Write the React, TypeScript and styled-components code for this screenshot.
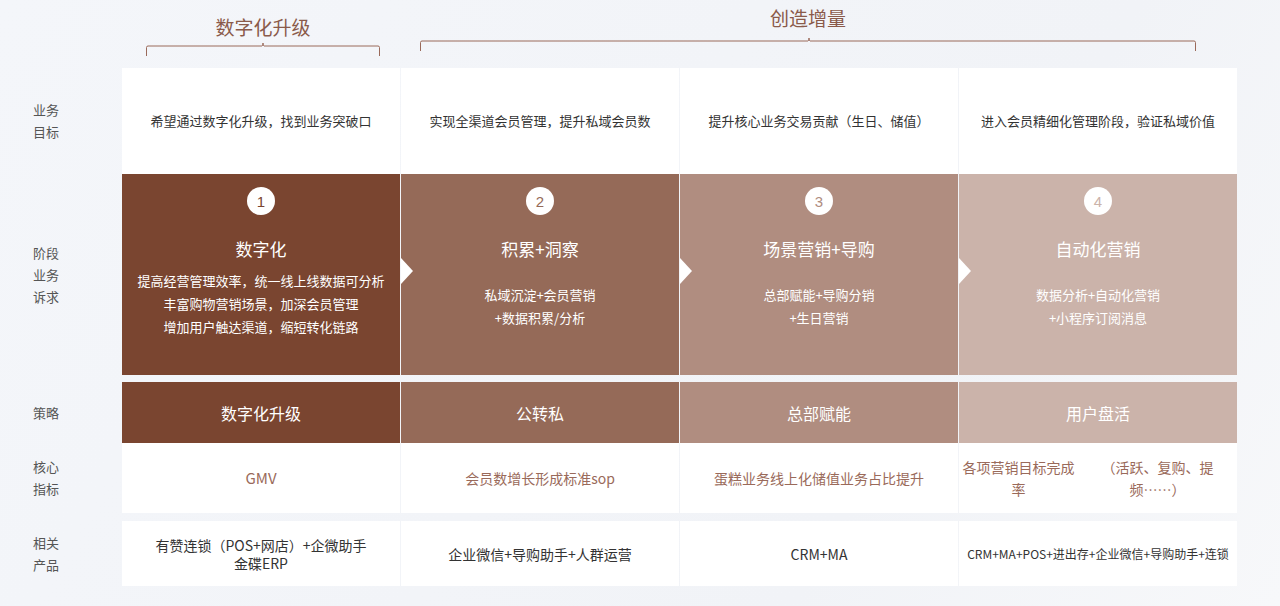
import React from "react";
import styled, { createGlobalStyle } from "styled-components";

const Global = createGlobalStyle`
  html, body { margin: 0; padding: 0; }
  body { background: linear-gradient(120deg, #f4f6fa 0%, #f1f3f7 70%, #f7f8fa 100%); font-family: "Noto Sans CJK SC", "Noto Sans", sans-serif; }
`;

const Page = styled.div`
  width: 1280px; height: 606px; overflow: hidden;
  display: flex; flex-direction: column;
`;
const Header = styled.div`
  height: 68px; display: grid; grid-template-columns: 121px 278px 834px; 
`;
const Group = styled.div<{ $top: number; $l: number; $r: number }>`
  display: flex; flex-direction: column; align-items: stretch;
  padding: ${p => p.$top}px ${p => p.$r}px 0 ${p => p.$l}px;
`;
const GroupTitle = styled.div`
  text-align: center; color: #8a5a4a; font-size: 19px; line-height: 26px;
`;
const Grid = styled.div`
  display: grid; grid-template-columns: 121px repeat(4, 278px);
  column-gap: 1px;
`;
const Label = styled.div<{ $h: number }>`
  height: ${p => p.$h}px; display: flex; align-items: center; justify-content: center;
  color: #555; font-size: 13px; line-height: 22px; text-align: center; width: 70px;
  padding-left: 22px; box-sizing: border-box;
`;
const White = styled.div<{ $h: number; $c?: string; $fs?: number }>`
  height: ${p => p.$h}px; background: #fff; display: flex; align-items: center; justify-content: center;
  text-align: center; color: ${p => p.$c || "#333"}; font-size: ${p => p.$fs || 13}px; line-height: 22px;
`;
const colors = ["#7a4530", "#956a58", "#b08d80", "#cbb3aa"];
const Stage = styled.div<{ $i: number }>`
  position: relative; height: 201px; background: ${p => colors[p.$i]}; color: #fff;
  display: flex; flex-direction: column; align-items: center; padding-top: 13px; box-sizing: border-box;
  text-align: center;
`;
const Num = styled.div<{ $i: number }>`
  width: 28px; height: 28px; border-radius: 50%; background: #fff; color: ${p => colors[p.$i]};
  font-size: 15px; display: flex; align-items: center; justify-content: center; font-family: "Liberation Sans", sans-serif;
`;
const StageTitle = styled.div`font-size: 17px; margin-top: 22px; line-height: 24px;`;
const StageDesc = styled.div<{ $mt: number }>`font-size: 13px; line-height: 23px; margin-top: ${p => p.$mt}px;`;
const Arrow = styled.div`
  position: absolute; left: 0; top: 84px; width: 0; height: 0;
  border-top: 13px solid transparent; border-bottom: 13px solid transparent; border-left: 12px solid #fff;
`;
const Strategy = styled.div<{ $i: number }>`
  height: 61px; background: ${p => colors[p.$i]}; color: #fff; font-size: 16px;
  display: flex; align-items: center; justify-content: center;
`;
const Gap = styled.div<{ $h: number }>`height: ${p => p.$h}px;`;

const Bracket = ({ w, mid }: { w: number; mid: number }) => (
  <svg width={w} height={14} style={{ display: "block" }}>
    <path d={`M0.5 13 V4.5 Q0.5 3 2 3 H${mid - 1} Q${mid} 3 ${mid} 0 Q${mid} 3 ${mid + 1} 3 H${w - 2} Q${w - 0.5} 3 ${w - 0.5} 4.5 V13`} fill="none" stroke="#9a6a5a" strokeWidth="1" />
  </svg>
);

const stages = [
  { t: "数字化", d: ["提高经营管理效率，统一线上线数据可分析", "丰富购物营销场景，加深会员管理", "增加用户触达渠道，缩短转化链路"], mt: 8 },
  { t: "积累+洞察", d: ["私域沉淀+会员营销", "+数据积累/分析"], mt: 22 },
  { t: "场景营销+导购", d: ["总部赋能+导购分销", "+生日营销"], mt: 22 },
  { t: "自动化营销", d: ["数据分析+自动化营销", "+小程序订阅消息"], mt: 22 },
];
const goals = ["希望通过数字化升级，找到业务突破口", "实现全渠道会员管理，提升私域会员数", "提升核心业务交易贡献（生日、储值）", "进入会员精细化管理阶段，验证私域价值"];
const strat = ["数字化升级", "公转私", "总部赋能", "用户盘活"];
const metrics = [["GMV"], ["会员数增长", "形成标准sop"], ["蛋糕业务线上化", "储值业务占比提升"], ["各项营销目标完成率", "（活跃、复购、提频……）"]];
const prods = [["有赞连锁（POS+网店）+企微助手", "金碟ERP"], ["企业微信+导购助手+人群运营"], ["CRM+MA"], ["CRM+MA+POS+进出存+企业微信+导购助手+连锁"]];

const lines = (a: string[]) => a.map((s, k) => <div key={k}>{s}</div>);

export default function App() {
  return (
    <Page>
      <Global />
      <Header>
        <div />
        <Group $top={14} $l={25} $r={19}>
          <GroupTitle>数字化升级</GroupTitle>
          <div style={{ marginTop: 3 }}><Bracket w={234} mid={117} /></div>
        </Group>
        <Group $top={5} $l={21} $r={37}>
          <GroupTitle>创造增量</GroupTitle>
          <div style={{ marginTop: 7 }}><Bracket w={776} mid={389} /></div>
        </Group>
      </Header>
      <Grid>
        <Label $h={106}>业务<br />目标</Label>
        {goals.map((g, i) => <White key={i} $h={106}>{g}</White>)}
        <Label $h={201}>阶段<br />业务<br />诉求</Label>
        {stages.map((s, i) => (
          <Stage key={i} $i={i}>
            {i > 0 && <Arrow />}
            <Num $i={i}>{i + 1}</Num>
            <StageTitle>{s.t}</StageTitle>
            <StageDesc $mt={s.mt}>{lines(s.d)}</StageDesc>
          </Stage>
        ))}
        {[0, 1, 2, 3, 4].map(k => <Gap key={k} $h={7} />)}
        <Label $h={61}>策略</Label>
        {strat.map((s, i) => <Strategy key={i} $i={i}>{s}</Strategy>)}
        <Label $h={70}>核心<br />指标</Label>
        {metrics.map((m, i) => <White key={i} $h={70} $c="#9a6a5a" $fs={i === 0 ? 15 : 14}>{lines(m)}</White>)}
        {[0, 1, 2, 3, 4].map(k => <Gap key={k} $h={8} />)}
        <Label $h={65}>相关<br />产品</Label>
        {prods.map((m, i) => <White key={i} $h={65} $c="#333" $fs={i === 3 ? 12 : 14} style={undefined}><div style={{ lineHeight: "18px" }}>{lines(m)}</div></White>)}
      </Grid>
    </Page>
  );
}
